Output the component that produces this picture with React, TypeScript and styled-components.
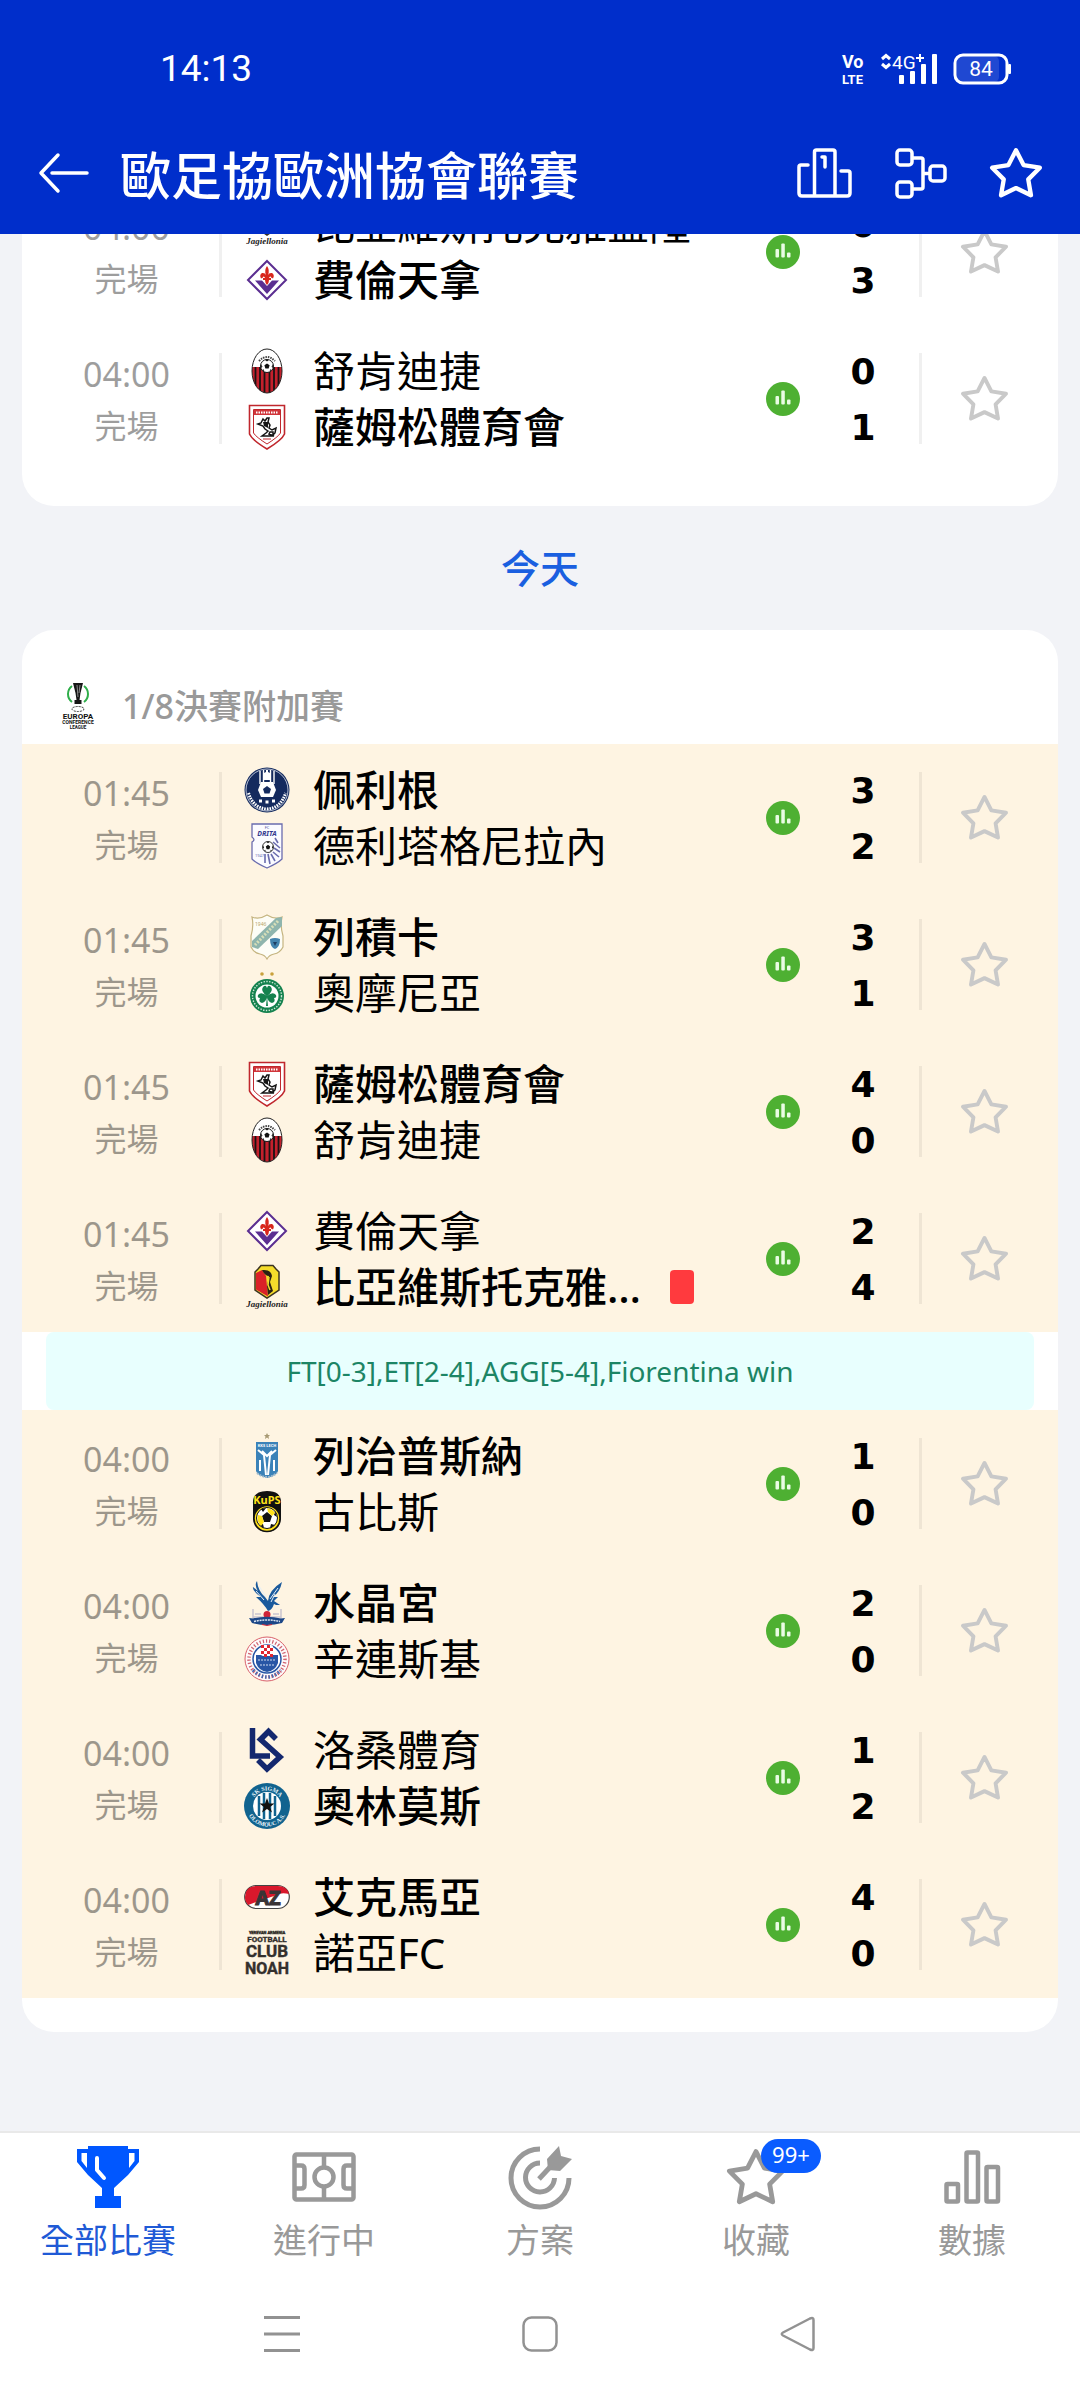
import React from "react";
import styled, { createGlobalStyle } from "styled-components";

const latin = `"Noto Sans", "Noto Sans CJK TC", sans-serif`;

const GlobalStyle = createGlobalStyle`
  *, *::before, *::after { box-sizing: border-box; }
  body { margin: 0; background: #f2f3f7; font-family: ${latin}; }
  button { border: 0; padding: 0; background: none; font: inherit; color: inherit; cursor: pointer; }
  a { color: inherit; text-decoration: none; }
  ul, h1, h2, h3, p { margin: 0; padding: 0; font-weight: 400; list-style: none; }
  svg { display: block; flex: none; overflow: visible; }
`;

const Page = styled.div`
  min-height: 100vh;
  display: flex;
  flex-direction: column;
`;

/* ---------- header ---------- */

const Header = styled.header`
  background: #002ecb;
  color: #fff;
`;

const StatusBar = styled.div`
  height: 112px;
  padding: 26px 69px 0 160px;
  display: flex;
  align-items: center;
  justify-content: space-between;
`;

const Clock = styled.time`
  font: 400 37px/48px Roboto, sans-serif;
`;

const StatusIcons = styled.div`
  display: flex;
  align-items: center;
  gap: 16px;
`;

const TitleBar = styled.div`
  height: 122px;
  padding: 0 38px;
  display: flex;
  align-items: center;
`;

const Title = styled.h1`
  flex: 1;
  margin-left: 30px;
  padding-top: 4px;
  font: 500 51px/52px ${latin};
`;

const TitleActions = styled.div`
  display: flex;
  align-items: center;
  gap: 43px;
`;

/* ---------- match list ---------- */

const Main = styled.main`
  flex: 1;
  overflow: hidden;
  padding: 0 22px;
`;

const Card = styled.section<{ $scrolled?: boolean }>`
  margin-top: ${(p) => (p.$scrolled ? "-56px" : "0")};
  padding-bottom: 34px;
  background: #fff;
  border-radius: 32px;
  overflow: hidden;
`;

const DayHeading = styled.h2`
  padding: 32px 0;
  text-align: center;
  color: #1a5fe0;
  font: 500 39px/60px ${latin};
`;

const RoundHeading = styled.h3`
  height: 114px;
  padding: 38px 40px 0;
  display: flex;
  align-items: center;
  gap: 28px;
  color: #999;
  font: 500 34px/48px ${latin};
`;

const Row = styled.li<{ $highlight?: boolean }>`
  height: 147px;
  padding: 0 12px;
  display: flex;
  align-items: center;
  background: ${(p) => (p.$highlight ? "#fef4e2" : "#fff")};
`;

const Kickoff = styled.div`
  width: 185px;
  padding-top: 2px;
  text-align: center;
  color: #000;
  opacity: 0.38;
  font: 400 34px/52px ${latin};
`;

const Status = styled.div`
  font-size: 32px;
`;

const Divider = styled.span`
  width: 3px;
  height: 91px;
  background: rgba(0, 0, 0, 0.06);
`;

const Teams = styled.div`
  flex: 1;
  min-width: 0;
  padding: 0 72px 0 22px;
`;

const Team = styled.div`
  height: 56px;
  display: flex;
  align-items: center;
`;

const TeamName = styled.span<{ $winner?: boolean }>`
  flex: 1;
  min-width: 0;
  margin-left: 23px;
  overflow: hidden;
  white-space: nowrap;
  text-overflow: ellipsis;
  color: #000;
  font: ${(p) => (p.$winner ? 500 : 400)} 42px/56px ${latin};
`;

const RedCard = styled.span`
  width: 24px;
  height: 34px;
  margin-left: 16px;
  border-radius: 4px;
  background: #ff3a3e;
`;

const RowButton = styled.button`
  display: flex;
  justify-content: center;
`;

const StarButton = styled(RowButton)`
  width: 124px;
`;

const Scores = styled.div`
  width: 119px;
  padding: 2px 0 0 7px;
  text-align: center;
  color: #000;
  font: 700 36px/56px "DejaVu Sans", sans-serif;
`;

const Note = styled.p`
  margin: 0 24px;
  border-radius: 8px;
  background: #e8fffe;
  color: #1c8565;
  text-align: center;
  font: 400 28px/78px ${latin};
`;

/* ---------- bottom bars ---------- */

const TabBar = styled.nav`
  height: 137px;
  display: flex;
  background: #fff;
  border-top: 2px solid #e9e9e9;
`;

const Tab = styled.a<{ $active?: boolean }>`
  flex: 1;
  padding-top: 12px;
  display: flex;
  flex-direction: column;
  align-items: center;
  gap: 7px;
  color: ${(p) => (p.$active ? "#1f5ad6" : "#999")};
  font: 400 34px/48px ${latin};
`;

const TabIcon = styled.span`
  position: relative;
  height: 64px;
  display: flex;
  align-items: center;
`;

const Badge = styled.span`
  position: absolute;
  left: 34px;
  top: -6px;
  width: 60px;
  padding-bottom: 4px;
  border-radius: 17px;
  background: #0a5cff;
  color: #fff;
  text-align: center;
  font: 400 22px/30px ${latin};
`;

const SystemBar = styled.div`
  height: 132px;
  padding: 0 153px;
  display: flex;
  background: #fff;
`;

const SystemButton = styled.button`
  flex: 1;
  display: flex;
  align-items: center;
  justify-content: center;
`;

/* ---------- icons ---------- */

const STAR =
  "M24 2.5 L31 16.2 L46 18.6 L35.3 29.4 L37.8 44 L24 37.4 L10.2 44 L12.7 29.4 L2 18.6 L17 16.2 Z";

const Star = ({ size, color, width }: { size: number; color: string; width: number }) => (
  <svg width={size} height={size} viewBox="0 0 48 47" fill="none">
    <path d={STAR} stroke={color} strokeWidth={width} strokeLinejoin="round" />
  </svg>
);

const VoLte = () => (
  <svg width="22" height="32" viewBox="0 0 22 32" fill="#fff" fontFamily="Roboto, sans-serif" fontWeight="700">
    <text x="0" y="15" fontSize="18">Vo</text>
    <text x="0" y="31" fontSize="13">LTE</text>
  </svg>
);

const Signal = () => (
  <svg width="57" height="32" viewBox="0 0 57 32" fill="#fff">
    <path d="M2 6 L6 2.5 L10 6 M2 11 L6 14.5 L10 11" fill="none" stroke="#fff" strokeWidth="3" />
    <text x="12" y="16" fontSize="19" fontFamily="Roboto, sans-serif">4G</text>
    <path d="M36 5 h8 M40 1 v8" stroke="#fff" strokeWidth="2" />
    <rect x="19" y="22" width="5" height="9" rx="1" />
    <rect x="30" y="18" width="5" height="13" rx="1" />
    <rect x="41" y="11" width="5" height="20" rx="1" />
    <rect x="52" y="1" width="5" height="30" rx="1" />
  </svg>
);

const Battery = () => (
  <svg width="58" height="32" viewBox="0 0 58 32">
    <rect x="4" y="3" width="42" height="26" rx="5" fill="#1f48d2" />
    <rect x="2" y="2" width="52" height="28" rx="8" fill="none" stroke="#fff" strokeWidth="3" />
    <rect x="55" y="11" width="3" height="10" rx="1" fill="#fff" />
    <text x="28" y="23" fontSize="21" fontFamily="Roboto, sans-serif" fill="#fff" textAnchor="middle">84</text>
  </svg>
);

const BackArrow = () => (
  <svg width="52" height="42" viewBox="0 0 52 42" fill="none" stroke="#fff" strokeWidth="3.5" strokeLinecap="round" strokeLinejoin="round">
    <path d="M20 3 L3 21 L20 39 M14 21 H49" />
  </svg>
);

const Podium = () => (
  <svg width="55" height="50" viewBox="0 0 55 50" fill="none" stroke="#fff" strokeWidth="3.5" strokeLinejoin="round" strokeLinecap="round">
    <path d="M11 17 H4 Q2 17 2 19 V45 Q2 48 5 48 H50 Q53 48 53 45 V25 Q53 23 51 23 H44" />
    <path d="M17.500 47 V4 Q17.500 2 19.500 2 H36 Q38 2 38 4 V47" />
    <path d="M25 9 H28 V19" />
  </svg>
);

const Bracket = () => (
  <svg width="52" height="50" viewBox="0 0 52 50" fill="none" stroke="#fff" strokeWidth="3.5" strokeLinejoin="round">
    <rect x="2" y="2" width="15" height="15" rx="3" />
    <rect x="2" y="34" width="15" height="15" rx="3" />
    <rect x="35" y="18" width="15" height="15" rx="3" />
    <path d="M17 10 H26 Q28 10 28 12 V39 Q28 41 26 41 H17 M28 25.500 H35" />
  </svg>
);

const StatsIcon = () => (
  <svg width="34" height="34" viewBox="0 0 34 34">
    <circle cx="17" cy="17" r="17" fill="#4eb032" />
    <g fill="#eafce4">
      <rect x="9.500" y="14" width="3.500" height="8.500" rx="1" />
      <rect x="15.300" y="8.500" width="3.500" height="14" rx="1" />
      <rect x="21" y="17.500" width="3.500" height="5" rx="1" />
    </g>
  </svg>
);

const TrophyIcon = () => (
  <svg width="62" height="62" viewBox="0 0 62 62" fill="#0057ff">
    <path d="M11 0 H51 V3 H62 V16 L51 29 L37 42 V50 H44 V62 H18 V50 H25 V42 L11 29 L0 16 V3 H11 Z" />
    <path d="M4.500 7 H10 V22 L4.500 15 Z M57.500 7 H52 V22 L57.500 15 Z" fill="#fff" />
    <path d="M20 12 V24 L27 32" fill="none" stroke="#fff" strokeWidth="4" strokeLinecap="round" strokeLinejoin="round" />
  </svg>
);

const PitchIcon = () => (
  <svg width="64" height="50" viewBox="0 0 64 50" fill="none" stroke="#999" strokeWidth="4.5">
    <rect x="2.500" y="2.500" width="59" height="45" rx="2" />
    <path d="M32 2 V14 M32 36 V48 M3 13.500 H9 Q12.500 13.500 12.500 17 V33 Q12.500 36.500 9 36.500 H3 M61 13.500 H55 Q51.500 13.500 51.500 17 V33 Q51.500 36.500 55 36.500 H61" />
    <circle cx="32" cy="25" r="9.500" />
  </svg>
);

const TargetIcon = () => (
  <svg width="64" height="64" viewBox="0 0 64 64" fill="none" stroke="#999" strokeWidth="5">
    <path d="M32 4 A29 29 0 1 0 61 33" />
    <path d="M32 18 A14.500 14.500 0 1 0 46.500 33" />
    <path d="M31 34 L44 20" />
    <path d="M39 14 L51 1 L53 11 L64 14 L52 26 L40 25 Z" fill="#999" stroke="none" />
  </svg>
);

const ChartIcon = () => (
  <svg width="57" height="54" viewBox="0 0 57 54" fill="none" stroke="#999" strokeWidth="4.5">
    <rect x="2.500" y="34" width="11.500" height="17.500" rx="1" />
    <rect x="22.500" y="2.500" width="11.500" height="49" rx="1" />
    <rect x="42.500" y="17" width="11.500" height="34.500" rx="1" />
  </svg>
);

/* ---------- club crests, all on a 46 by 46 grid ---------- */

const Ball = ({ x, y, r }: { x: number; y: number; r: number }) => (
  <g transform={`translate(${x} ${y}) scale(${r / 10})`}>
    <circle r="10" fill="#fff" stroke="#111" strokeWidth="1.500" />
    <path d="M0 -4 L4 -1 L2.500 4 H-2.500 L-4 -1 Z M-3 -9.500 H3 L0 -7 Z M9 -3 L9 3 L7 1 Z M-9 -3 L-9 3 L-7 1 Z M4 8.500 L7 6 L5 5 Z M-4 8.500 L-7 6 L-5 5 Z" fill="#111" />
  </g>
);

const crests = {
  fiorentina: (
    <>
      <path d="M23 4 L42 23 L23 42 L4 23 Z" fill="#fff" stroke="#5b2e91" strokeWidth="2" />
      <path d="M11 23.500 H18 L23 29 L28 23.500 H35 L23 37 Z" fill="#5b2e91" />
      <path d="M23 9 Q26 13 24 18 Q25 15.500 28 16 Q31 18 29 21.500 L27 20.500 Q27 19 25.500 20 L25 21 H27 V23 H25 Q25 26 23 28 Q21 26 21 23 H19 V21 H21 L20.500 20 Q19 19 19 20.500 L17 21.500 Q15 18 18 16 Q21 15.500 22 18 Q20 13 23 9 Z" fill="#d8261c" />
    </>
  ),
  shkendija: (
    <>
      <clipPath id="oval"><ellipse cx="23" cy="23" rx="15" ry="22" /></clipPath>
      <g clipPath="url(#oval)">
        <rect width="46" height="46" fill="#fff" />
        <rect y="19" width="46" height="27" fill="#c4202c" />
        <path d="M11.500 19 V46 M16 19 V46 M20.500 19 V46 M25.500 19 V46 M30 19 V46 M34.500 19 V46" stroke="#1a1214" strokeWidth="1.800" />
      </g>
      <path d="M15 13 Q23 5 31 13" fill="none" stroke="#444" strokeWidth="2" strokeDasharray="1.500 1" />
      <ellipse cx="23" cy="23" rx="15" ry="22" fill="none" stroke="#222" />
      <Ball x={23} y={18} r={6.5} />
    </>
  ),
  samsun: (
    <>
      <path d="M5.500 1.500 H40.500 V30 Q38 36 23 45 Q8 36 5.500 30 Z" fill="#fff" stroke="#c0272d" strokeWidth="1.600" />
      <path d="M9.500 5.500 H36.500 V29 Q34 33 23 40 Q12 33 9.500 29 Z" fill="#fff" stroke="#c0272d" />
      <rect x="10" y="6" width="26" height="5" fill="#d0353a" />
      <path d="M12 8.500 H34" stroke="#fff" strokeWidth="2" strokeDasharray="1.500 1" />
      <path d="M14 20 L17 19 L19 15 L21 17 L23 14 L25 14 L24 18 L26 21 L25 24 L28 26 L32 24 L31 29 L29 31 L29 28 L26 28 L25 30 L30 32 L18 32 L22 29 L24 27 L21 25 L19 22 Z" fill="none" stroke="#151515" strokeWidth="1.500" />
      <path d="M19 18 L24 18 L24 24 L20 22 Z" fill="#151515" />
      <path d="M19 35 H27" stroke="#c0272d" />
    </>
  ),
  pelagon: (
    <>
      <circle cx="23" cy="23" r="22.500" fill="#142a5e" />
      <circle cx="23" cy="23" r="21" fill="none" stroke="#dfe5f0" strokeWidth=".8" />
      <path d="M16 4 V17 M19.500 3 V15 M26.500 3 V15 M30 4 V17" stroke="#fff" strokeWidth="1.400" />
      <path d="M20 6 L22 5 V3 H24 V5 L26 6 V13 H20 Z" fill="#fff" />
      <path d="M4.500 26 Q9 41 23 42 Q37 41 41.500 26" fill="none" stroke="#fff" strokeWidth="3" strokeDasharray="1.600 1" />
      <path d="M17 15 L29 15 L32 23 L29 30 H17 L14 23 Z" fill="#fff" />
      <path d="M23 19 L27 22 L25.500 26.500 H20.500 L19 22 Z" fill="#142a5e" />
      <path d="M15 34 H18 M21.500 35 H24.500 M28 34 H31" stroke="#fff" strokeWidth="3" />
    </>
  ),
  drita: (
    <>
      <path d="M8 1 H38 V36 Q34 40 23 45 Q12 40 8 36 V19 Q12 17 8 14 Z" fill="#fbfbff" stroke="#6a6cae" strokeWidth="1.300" />
      <text x="23" y="6" fontSize="4" textAnchor="middle" fill="#4a4f9c">FC</text>
      <text x="23" y="12.500" fontSize="7" fontWeight="700" fontStyle="italic" textAnchor="middle" fill="#33388e">DRITA</text>
      <path d="M31 15 L34 20 M29 19 L36 25 M30 25 L36 29 M29 29 L35 34 M27 31 L31 38 M24 31 L26 41 M21 31 V40" stroke="#6a6cae" strokeWidth="1.600" />
      <Ball x={24} y={24} r={5.5} />
      <text x="11" y="34" fontSize="4" fill="#6a6cae">1947</text>
    </>
  ),
  rijeka: (
    <>
      <path d="M8 3 Q15 6 23 1 Q31 6 38 3 Q36 12 39 22 V33 Q36 39 30 40 Q25 41 23 45 Q21 41 16 40 Q10 39 7 33 V22 Q10 12 8 3 Z" fill="#fdfdf6" stroke="#c5b581" strokeWidth="1.200" />
      <path d="M32 4 L38 3 L38 12 L14 35 L8 33 V27 Z" fill="#8fb5ad" />
      <path d="M34 7 L11 31" stroke="#d7dfb8" strokeWidth="3" strokeDasharray="2 1.500" />
      <text x="11" y="12" fontSize="5" fill="#b7a468">1946</text>
      <path d="M26 25 Q31 23 36 25 Q36 33 31 35 Q26 33 26 25 Z" fill="#4383ad" />
      <path d="M29 28 H33 L31 32 Z" fill="#1f3f63" />
    </>
  ),
  omonia: (
    <>
      <circle cx="18" cy="4" r="1.800" fill="#c9a13c" />
      <circle cx="28" cy="4" r="1.800" fill="#c9a13c" />
      <circle cx="23" cy="26" r="17" fill="#15824f" />
      <circle cx="23" cy="26" r="14.500" fill="none" stroke="#cfe8d8" strokeWidth="1.400" strokeDasharray="1.400 1.400" />
      <circle cx="23" cy="26" r="11.500" fill="#fff" />
      <path d="M23 26 Q16 21 19 17 Q22 14 23 18 Q24 14 27 17 Q30 21 23 26 Q29 21 32 25 Q33 28 30 28 Q32 32 28 33 Q24 32 23 27 Q22 32 18 33 Q14 32 16 28 Q13 28 14 25 Q17 21 23 26 L24 36 H22 Z" fill="#15824f" />
    </>
  ),
  jagiellonia: (
    <>
      <path d="M14 5 L17 1.500 H29 L32 5 L35 8 V26 L23 34 L11 26 V8 Z" fill="#f5dc2b" stroke="#3b3320" strokeWidth="1.500" />
      <path d="M12 9 L18 6 L22 12 L24 32.500 L12 25.500 Z" fill="#da2128" />
      <path d="M18 6 Q27 5 28 12 L26 18 L29 27 L24 31 L23 22 L25 12 Q21 12 18 6 Z" fill="#2b2014" />
      <path d="M25 13 L24 21 L26 26" stroke="#f5dc2b" strokeWidth="1.500" fill="none" />
      <text x="23" y="43" fontSize="9" fontWeight="700" fontStyle="italic" fontFamily="Liberation Serif, serif" textAnchor="middle" fill="#222">Jagiellonia</text>
    </>
  ),
  lech: (
    <>
      <path d="M23 0 L24 2 L26 2 L24.500 3.500 L25 6 L23 4.500 L21 6 L21.500 3.500 L20 2 L22 2 Z" fill="#a89a74" />
      <path d="M12 9 H34 V38 Q33 42 23 45 Q13 42 12 38 Z" fill="#3b82b8" />
      <text x="23" y="13.500" fontSize="4" fontWeight="700" textAnchor="middle" fill="#fff">KKS LECH</text>
      <path d="M14 17 L20 22 L22 42 M32 17 L26 22 L24 42 M18 18 L23 23 L28 18 M16 27 V38 M30 27 V38" stroke="#fff" strokeWidth="2" fill="none" />
      <path d="M13 40 Q23 48 33 40" stroke="#9db8cb" strokeWidth="2" fill="none" strokeDasharray="2 1" />
    </>
  ),
  kups: (
    <>
      <path d="M9 15 Q8 2 23 2 Q38 2 37 15 V30 Q36 42 23 43 Q10 42 9 30 Z" fill="#111" />
      <circle cx="23" cy="29.500" r="13" fill="#ffe11a" stroke="#111" strokeWidth="1.500" />
      <circle cx="23" cy="29" r="10.500" fill="#fff" stroke="#111" />
      <path d="M23 23 L28 27 L26 33 H20 L18 27 Z M17 20 L22 19 L19 23 Z M31 22 L33 28 L30 26 Z M31 36 L26 39 L27 35 Z M15 36 L20 39 L19 35 Z" fill="#111" />
      <path d="M14 26 L18 27 L20 33 L17 37 Q12 32 14 26 Z M23 19 Q29 20 31 24 L28 27 L24 23 Z" fill="#ffe11a" />
      <text x="23" y="15" fontSize="11" fontWeight="700" textAnchor="middle" fill="#ffe11a">KuPS</text>
    </>
  ),
  palace: (
    <>
      <path d="M13 1 Q14 11 21 17 L24 21 Q25 10 38 2 Q36 12 29 17 L34 17 L30 21 L33 23 L36 25 L32 25 L30 24 Q28 30 24 31 Q20 24 12 17 L17 17 Q8 11 9 7 L14 11 Q10 5 13 1 Z" fill="#1b5a9c" />
      <path d="M15 6 L22 17 M12 11 L20 20 M34 8 L26 19 M31 14 L27 22" stroke="#e6eff7" />
      <path d="M9 29 V39 M37 29 V39 M9 37 H37 M11 34 H17 M29 34 H35" stroke="#c9c3cf" strokeWidth="1.500" />
      <circle cx="23" cy="34.500" r="3.500" fill="#cf2438" />
      <path d="M5 38 L9 38.500 Q23 35 37 38.500 L41 38 L38 43 Q23 47 8 43 Z" fill="#1c4787" />
      <path d="M10 41.500 Q23 38.500 36 41.500" stroke="#dce6f2" strokeWidth="1.500" fill="none" strokeDasharray="2 .8" />
      <path d="M18 44.500 Q23 46.500 28 44.500" stroke="#cf2438" fill="none" />
    </>
  ),
  zrinjski: (
    <>
      <circle cx="23" cy="23" r="22" fill="#fdfafa" stroke="#d9616b" />
      <circle cx="23" cy="23" r="18" fill="none" stroke="#d0626f" strokeWidth="3.500" strokeDasharray="1.200 2" />
      <path d="M9 34 Q23 48 37 34" fill="none" stroke="#4267b0" strokeWidth="3.500" strokeDasharray="1.500 2" />
      <circle cx="23" cy="23" r="14" fill="#fff" stroke="#2856a5" strokeWidth="1.500" />
      <path d="M12 19 H34 V27 Q31 35 23 36 Q15 35 12 27 Z" fill="#2856a5" />
      <path d="M14 24 H32 M16 29 H30" stroke="#cfdcf0" strokeDasharray="2 1" />
      <rect x="17" y="9" width="12" height="11" rx="2" fill="#fff" />
      <path d="M17 10.500 H29 M17 16.500 H29" stroke="#e0262f" strokeWidth="3" strokeDasharray="3 3" />
      <path d="M20 13.500 H29 M20 19.500 H29" stroke="#e0262f" strokeWidth="3" strokeDasharray="3 3" />
    </>
  ),
  lausanne: (
    <>
      <path d="M8.500 1 V29 H26" fill="none" stroke="#14286e" strokeWidth="5.500" />
      <path d="M32 12 L24.500 4.500 L16.500 12.500 L36 30 L23 42 L14 33" fill="none" stroke="#14286e" strokeWidth="5.500" />
    </>
  ),
  olomouc: (
    <>
      <circle cx="23" cy="23" r="23" fill="#11638f" />
      <path id="arcTop" d="M7.500 23 A15.500 15.500 0 0 1 38.500 23" fill="none" />
      <path id="arcLow" d="M2.500 23 A20.500 20.500 0 0 0 43.500 23" fill="none" />
      <g fontSize="6" fontWeight="700" fill="#eaf4fa" textAnchor="middle" fontFamily="Liberation Serif, serif">
        <text><textPath href="#arcTop" startOffset="50%">SK SIGMA</textPath></text>
        <text><textPath href="#arcLow" startOffset="50%">OLOMOUC A.S.</textPath></text>
      </g>
      <circle cx="23" cy="23" r="14" fill="#fff" />
      <path d="M15 13 V33 M20 10 V36 M26 10 V36 M31 13 V33" stroke="#11638f" strokeWidth="2.500" />
      <path d="M23 15 L25 20.500 H30.500 L26 24 L28 29.500 L23 26 L18 29.500 L20 24 L15.500 20.500 H21 Z" fill="#111" />
    </>
  ),
  az: (
    <>
      <rect x=".7" y="11.500" width="44.600" height="23" rx="11.500" fill="#fff" stroke="#444" strokeWidth="1.200" />
      <path d="M4 31 Q0 26 1.200 22 Q2 12 12 12 H34 Q43 12 45 20 Q36 18 30 22 L12 28 Q7 30 4 31 Z" fill="#d9182c" />
      <text x="24" y="31" fontSize="20" fontWeight="700" textAnchor="middle" fill="#3a3436" stroke="#3a3436">AZ</text>
    </>
  ),
  noah: (
    <g fill="#34302d" stroke="#34302d" strokeWidth=".4" fontWeight="700" textAnchor="middle" fontFamily="Roboto, sans-serif">
      <text x="23" y="4" fontSize="4">YEREVAN ARMENIA</text>
      <text x="23" y="12" fontSize="8">FOOTBALL</text>
      <text x="23" y="27" fontSize="17">CLUB</text>
      <text x="23" y="44" fontSize="16">NOAH</text>
    </g>
  ),
};

type CrestName = keyof typeof crests;

const Crest = ({ name }: { name: CrestName }) => (
  <svg width="46" height="46" viewBox="0 0 46 46" aria-hidden="true">{crests[name]}</svg>
);

const LeagueLogo = () => (
  <svg width="32" height="46" viewBox="0 0 32 46" aria-hidden="true">
    <path d="M10 3 A10 10 0 0 0 10 19 M22 3 A10 10 0 0 1 22 19" fill="none" stroke="#2fae4a" strokeWidth="2" />
    <path d="M11 0 H21 L18.500 10 L17.500 17 H19.500 V21 H12.500 V17 H14.500 L13.500 10 Z" fill="#161616" />
    <path d="M15 2 L16 14 M18 2 L17 10" stroke="#aaa" strokeWidth=".8" />
    <ellipse cx="16" cy="26" rx="6" ry="2.500" fill="none" stroke="#333" strokeDasharray="2 1" />
    <g textAnchor="middle" fontWeight="700" fontFamily="Roboto, sans-serif" fill="#111">
      <text x="16" y="36" fontSize="8">EUROPA</text>
      <text x="16" y="41" fontSize="5">CONFERENCE</text>
      <text x="16" y="45.500" fontSize="4.500">LEAGUE</text>
    </g>
  </svg>
);

/* ---------- data ---------- */

interface Side {
  name: string;
  crest: CrestName;
  score: number;
  winner?: boolean;
  redCard?: boolean;
}

interface Match {
  time: string;
  home: Side;
  away: Side;
  note?: string;
}

const yesterday: Match[] = [
  {
    time: "04:00",
    home: { name: "比亞維斯托克雅蓋隆", crest: "jagiellonia", score: 0 },
    away: { name: "費倫天拿", crest: "fiorentina", score: 3, winner: true },
  },
  {
    time: "04:00",
    home: { name: "舒肯迪捷", crest: "shkendija", score: 0 },
    away: { name: "薩姆松體育會", crest: "samsun", score: 1, winner: true },
  },
];

const today: Match[] = [
  {
    time: "01:45",
    home: { name: "佩利根", crest: "pelagon", score: 3, winner: true },
    away: { name: "德利塔格尼拉內", crest: "drita", score: 2 },
  },
  {
    time: "01:45",
    home: { name: "列積卡", crest: "rijeka", score: 3, winner: true },
    away: { name: "奧摩尼亞", crest: "omonia", score: 1 },
  },
  {
    time: "01:45",
    home: { name: "薩姆松體育會", crest: "samsun", score: 4, winner: true },
    away: { name: "舒肯迪捷", crest: "shkendija", score: 0 },
  },
  {
    time: "01:45",
    home: { name: "費倫天拿", crest: "fiorentina", score: 2 },
    away: { name: "比亞維斯托克雅蓋隆", crest: "jagiellonia", score: 4, winner: true, redCard: true },
    note: "FT[0-3],ET[2-4],AGG[5-4],Fiorentina win",
  },
  {
    time: "04:00",
    home: { name: "列治普斯納", crest: "lech", score: 1, winner: true },
    away: { name: "古比斯", crest: "kups", score: 0 },
  },
  {
    time: "04:00",
    home: { name: "水晶宮", crest: "palace", score: 2, winner: true },
    away: { name: "辛連斯基", crest: "zrinjski", score: 0 },
  },
  {
    time: "04:00",
    home: { name: "洛桑體育", crest: "lausanne", score: 1 },
    away: { name: "奧林莫斯", crest: "olomouc", score: 2, winner: true },
  },
  {
    time: "04:00",
    home: { name: "艾克馬亞", crest: "az", score: 4, winner: true },
    away: { name: "諾亞FC", crest: "noah", score: 0 },
  },
];

/* ---------- composition ---------- */

const TeamLine = ({ side }: { side: Side }) => (
  <Team>
    <Crest name={side.crest} />
    <TeamName $winner={side.winner}>{side.name}</TeamName>
    {side.redCard && <RedCard />}
  </Team>
);

const MatchRow = ({ match, highlight }: { match: Match; highlight?: boolean }) => (
  <Row $highlight={highlight}>
    <Kickoff>
      <div>{match.time}</div>
      <Status>完場</Status>
    </Kickoff>
    <Divider />
    <Teams>
      <TeamLine side={match.home} />
      <TeamLine side={match.away} />
    </Teams>
    <RowButton type="button" aria-label="數據">
      <StatsIcon />
    </RowButton>
    <Scores>
      <div>{match.home.score}</div>
      <div>{match.away.score}</div>
    </Scores>
    <Divider />
    <StarButton type="button" aria-label="收藏">
      <Star size={47} color="#c9c9c9" width={4} />
    </StarButton>
  </Row>
);

const tabs = [
  { label: "全部比賽", icon: <TrophyIcon />, active: true },
  { label: "進行中", icon: <PitchIcon /> },
  { label: "方案", icon: <TargetIcon /> },
  { label: "收藏", icon: <Star size={58} color="#999" width={4} />, badge: "99+" },
  { label: "數據", icon: <ChartIcon /> },
];

export default function App() {
  return (
    <Page>
      <GlobalStyle />
      <Header>
        <StatusBar>
          <Clock>14:13</Clock>
          <StatusIcons>
            <VoLte />
            <Signal />
            <Battery />
          </StatusIcons>
        </StatusBar>
        <TitleBar>
          <RowButton type="button" aria-label="返回"><BackArrow /></RowButton>
          <Title>歐足協歐洲協會聯賽</Title>
          <TitleActions>
            <RowButton type="button" aria-label="排名"><Podium /></RowButton>
            <RowButton type="button" aria-label="賽程"><Bracket /></RowButton>
            <RowButton type="button" aria-label="收藏"><Star size={52} color="#fff" width={4} /></RowButton>
          </TitleActions>
        </TitleBar>
      </Header>

      <Main>
        <Card $scrolled>
          <ul>
            {yesterday.map((m) => <MatchRow key={m.home.name} match={m} />)}
          </ul>
        </Card>
        <DayHeading>今天</DayHeading>
        <Card>
          <RoundHeading>
            <LeagueLogo />
            <span>1/8決賽附加賽</span>
          </RoundHeading>
          <ul>
            {today.map((m) => (
              <React.Fragment key={m.home.name}>
                <MatchRow match={m} highlight />
                {m.note && <li><Note>{m.note}</Note></li>}
              </React.Fragment>
            ))}
          </ul>
        </Card>
      </Main>

      <TabBar>
        {tabs.map((t) => (
          <Tab key={t.label} href="#" $active={t.active}>
            <TabIcon>
              {t.icon}
              {t.badge && <Badge>{t.badge}</Badge>}
            </TabIcon>
            {t.label}
          </Tab>
        ))}
      </TabBar>

      <SystemBar>
        <SystemButton type="button" aria-label="最近">
          <svg width="36" height="36" viewBox="0 0 36 36" stroke="#929292" strokeWidth="3">
            <path d="M0 1.500 H36 M0 18 H36 M0 34.500 H36" />
          </svg>
        </SystemButton>
        <SystemButton type="button" aria-label="主頁">
          <svg width="36" height="36" viewBox="0 0 36 36" fill="none" stroke="#929292" strokeWidth="2.500">
            <rect x="1.500" y="1.500" width="33" height="33" rx="8" />
          </svg>
        </SystemButton>
        <SystemButton type="button" aria-label="返回">
          <svg width="36" height="36" viewBox="0 0 36 36" fill="none" stroke="#929292" strokeWidth="2.500" strokeLinejoin="round">
            <path d="M3 16.500 L30 2.500 Q33.500 1 33.500 4 V32 Q33.500 35 30 33.500 L3 19.500 Q.5 18 3 16.500 Z" />
          </svg>
        </SystemButton>
      </SystemBar>
    </Page>
  );
}
